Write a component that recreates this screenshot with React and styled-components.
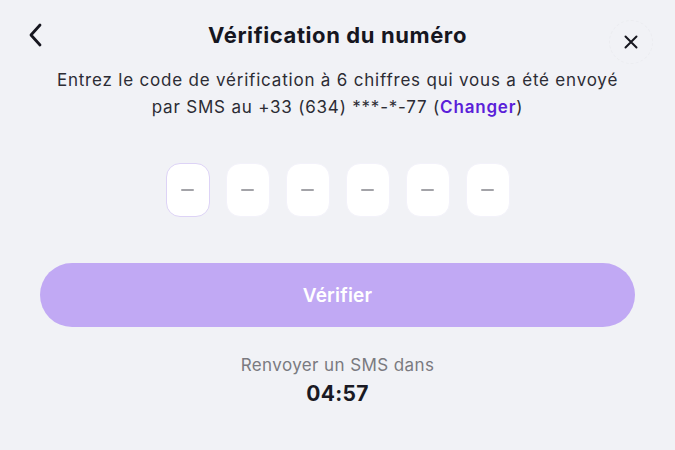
import React from 'react'
import styled, { createGlobalStyle } from 'styled-components'

const Global = createGlobalStyle`
  html, body {
    margin: 0;
    padding: 0;
    background: #f1f2f6;
    font-family: "Inter", "Noto Sans", sans-serif;
  }
`

const Screen = styled.div`
  width: 675px;
  height: 450px;
  box-sizing: border-box;
  background: #f1f2f6;
  display: flex;
  flex-direction: column;
  align-items: center;
  padding: 17px 40px 0;
  overflow: hidden;
`

const Header = styled.div`
  position: relative;
  width: 100%;
  height: 36px;
  display: flex;
  align-items: center;
  justify-content: center;
`

const BackButton = styled.button`
  position: absolute;
  left: -19px;
  top: 3px;
  width: 28px;
  height: 30px;
  padding: 0;
  border: none;
  background: none;
  display: flex;
  align-items: center;
  justify-content: center;
`

const CloseButton = styled.button`
  position: absolute;
  right: -18px;
  top: 3px;
  width: 44px;
  height: 44px;
  border-radius: 50%;
  padding: 0;
  border: 1px dashed #ebecf0;
  background: none;
  display: flex;
  align-items: center;
  justify-content: center;
`

const Title = styled.h1`
  margin: 0;
  font-size: 22px;
  font-weight: 700;
  color: #16161f;
  letter-spacing: 0.6px;
`

const Description = styled.p`
  margin: 14px 0 0;
  font-size: 17px;
  line-height: 27px;
  color: #2c2c34;
  text-align: center;
  letter-spacing: 0.8px;
  white-space: nowrap;
`

const Link = styled.span`
  color: #5b1fd9;
  font-weight: 600;
`

const CodeRow = styled.div`
  display: flex;
  gap: 16px;
  margin-top: 42px;
`

const CodeBox = styled.div`
  width: 44px;
  height: 54px;
  box-sizing: border-box;
  border-radius: 14px;
  background: #ffffff;
  border: 1.5px solid ${p => (p.$active ? '#ddd3f6' : '#f3f2fa')};
  display: flex;
  align-items: center;
  justify-content: center;

  &::after {
    content: '';
    width: 13px;
    height: 2px;
    border-radius: 1px;
    background: #a3a3a8;
  }
`

const VerifyButton = styled.button`
  margin-top: 46px;
  width: 595px;
  height: 64px;
  border: none;
  border-radius: 32px;
  background: #c1a9f4;
  color: #ffffff;
  font-family: inherit;
  font-size: 19px;
  font-weight: 600;
  letter-spacing: 0.2px;
`

const ResendLabel = styled.div`
  margin-top: 28px;
  font-size: 17px;
  color: #7a7a80;
  letter-spacing: 0.4px;
`

const Timer = styled.div`
  margin-top: 6px;
  font-size: 21px;
  font-weight: 700;
  color: #1a1a24;
  letter-spacing: 0.3px;
`

export default function App() {
  return (
    <>
      <Global />
      <Screen>
        <Header>
          <BackButton aria-label="Retour">
            <svg width="18" height="26" viewBox="0 0 18 26" fill="none">
              <path d="M14 3 L5 13 L14 23" stroke="#16161f" strokeWidth="2.8" strokeLinecap="round" strokeLinejoin="round" />
            </svg>
          </BackButton>
          <Title>Vérification du numéro</Title>
          <CloseButton aria-label="Fermer">
            <svg width="14" height="14" viewBox="0 0 14 14" fill="none">
              <path d="M1.5 1.5 L12.5 12.5 M12.5 1.5 L1.5 12.5" stroke="#16161f" strokeWidth="2" strokeLinecap="round" />
            </svg>
          </CloseButton>
        </Header>
        <Description>
          Entrez le code de vérification à 6 chiffres qui vous a été envoyé
          <br />
          par SMS au +33 (634) ***-*-77 (<Link>Changer</Link>)
        </Description>
        <CodeRow>
          {[0, 1, 2, 3, 4, 5].map(i => (
            <CodeBox key={i} $active={i === 0} />
          ))}
        </CodeRow>
        <VerifyButton>Vérifier</VerifyButton>
        <ResendLabel>Renvoyer un SMS dans</ResendLabel>
        <Timer>04:57</Timer>
      </Screen>
    </>
  )
}
